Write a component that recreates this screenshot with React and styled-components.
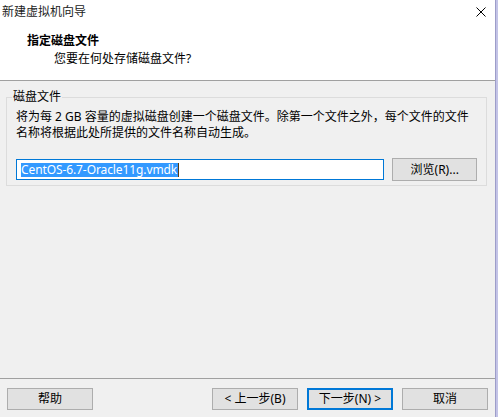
import styled, { createGlobalStyle } from 'styled-components';

const GlobalStyle = createGlobalStyle`
  html, body {
    margin: 0;
    padding: 0;
    background: #c3c3e6;
  }
  body {
    font-family: "Noto Sans", "Noto Sans CJK SC", sans-serif;
    font-size: 12px;
    color: #000;
  }
`;

const Window = styled.div`
  width: 495px;
  height: 417px;
  background: #f0f0f0;
  border-right: 1px solid #9d9dc9;
  display: flex;
  flex-direction: column;
`;

const TitleBar = styled.div`
  height: 24px;
  background: #fff;
  display: flex;
  align-items: center;
  justify-content: space-between;
  padding: 0 9px 0 2px;
  color: #222;
  line-height: 14px;
`;

const CloseIcon = styled.svg`
  width: 10px;
  height: 10px;
  display: block;
`;

const Header = styled.div`
  height: 57px;
  background: #fff;
  border-bottom: 1px solid #a0a0a0;
  padding-top: 9px;
  box-sizing: border-box;
`;

const HeaderTitle = styled.div`
  font-weight: bold;
  line-height: 16px;
  padding-left: 27px;
`;

const HeaderSub = styled.div`
  line-height: 16px;
  margin-top: 2px;
  padding-left: 54px;
`;

const Content = styled.div`
  flex: 1;
  padding-top: 9px;
`;

const GroupBox = styled.fieldset`
  margin: 0 8px 0 6px;
  padding: 5px 9px 4px 9px;
  border: 1px solid #dcdcdc;
  min-width: 0;
`;

const Legend = styled.legend`
  padding: 0 1px;
  margin-left: -4px;
  line-height: 14px;
`;

const Description = styled.p`
  margin: 0;
  line-height: 16px;
  white-space: nowrap;
`;

const FileRow = styled.div`
  display: flex;
  align-items: center;
  gap: 8px;
  margin-top: 17px;
`;

const PathField = styled.div`
  width: 370px;
  height: 21px;
  box-sizing: border-box;
  border: 1px solid #0078d7;
  background: #fff;
  padding-left: 4px;
  display: flex;
  align-items: center;
`;

const Selection = styled.span`
  background: #3399ff;
  color: #fff;
  line-height: 14px;
  height: 14px;
  padding-right: 1px;
  font-size: 12px;
  letter-spacing: -0.1px;
`;

const Caret = styled.span`
  width: 1px;
  height: 14px;
  background: #5a3a10;
`;

const Button = styled.button`
  width: ${(p) => p.$width || 86}px;
  height: ${(p) => p.$height || 22}px;
  box-sizing: border-box;
  font-family: inherit;
  font-size: 12px;
  line-height: 14px;
  color: #000;
  background: #e1e1e1;
  border: 1px solid ${(p) => (p.$default ? '#0078d7' : '#adadad')};
  box-shadow: ${(p) => (p.$default ? 'inset 0 0 0 1px #0078d7' : 'none')};
  padding: 0;
  margin: 0;
  border-radius: 0;
`;

const Footer = styled.div`
  height: 39px;
  box-sizing: border-box;
  border-top: 1px solid #a0a0a0;
  padding: 9px 7px 0 7px;
  display: flex;
  align-items: flex-start;
  gap: 9px;
`;

const Spacer = styled.div`
  flex: 1;
`;

export default function App() {
  return (
    <>
      <GlobalStyle />
      <Window>
        <TitleBar>
          <span>新建虚拟机向导</span>
          <CloseIcon viewBox="0 0 10 10">
            <path d="M0.5 0.5 L9.5 9.5 M9.5 0.5 L0.5 9.5" stroke="#000" strokeWidth="1" fill="none" />
          </CloseIcon>
        </TitleBar>
        <Header>
          <HeaderTitle>指定磁盘文件</HeaderTitle>
          <HeaderSub>您要在何处存储磁盘文件?</HeaderSub>
        </Header>
        <Content>
          <GroupBox>
            <Legend>磁盘文件</Legend>
            <Description>
              将为每 2 GB 容量的虚拟磁盘创建一个磁盘文件。除第一个文件之外，每个文件的文件
              <br />
              名称将根据此处所提供的文件名称自动生成。
            </Description>
            <FileRow>
              <PathField>
                <Selection>CentOS-6.7-Oracle11g.vmdk</Selection>
                <Caret />
              </PathField>
              <Button $width={85} $height={23}>浏览(R)...</Button>
            </FileRow>
          </GroupBox>
        </Content>
        <Footer>
          <Button>帮助</Button>
          <Spacer />
          <Button>&lt; 上一步(B)</Button>
          <Button $default>下一步(N) &gt;</Button>
          <Button>取消</Button>
        </Footer>
      </Window>
    </>
  );
}
